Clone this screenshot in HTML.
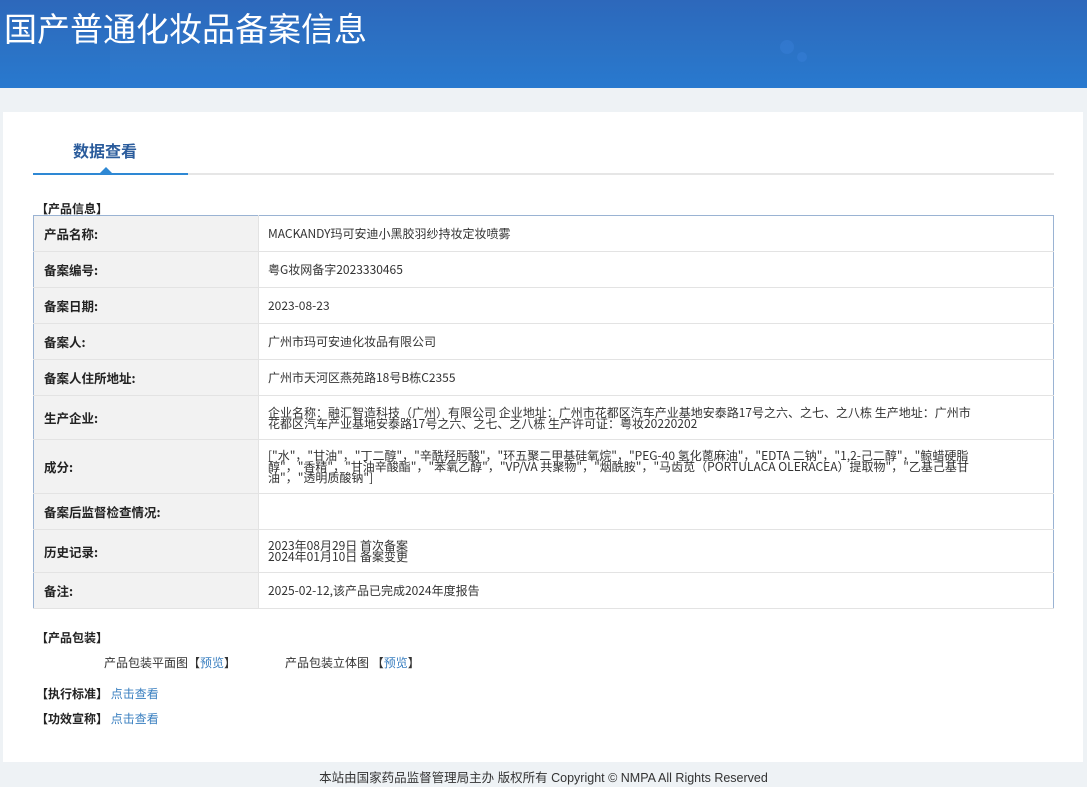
<!DOCTYPE html>
<html><head><meta charset="utf-8"><style>
*{margin:0;padding:0;box-sizing:border-box}
body{width:1087px;height:787px;background:#eef2f5;font-family:"Liberation Sans","Noto Sans CJK SC",sans-serif;color:#333;position:relative;overflow:hidden}
.hd{position:absolute;left:0;top:0;width:1087px;height:88px;background:linear-gradient(180deg,#2d68bb 0%,#2b73c6 60%,#2879cf 100%);overflow:hidden}
.hd h1{position:absolute;left:4px;top:3px;font-size:33px;font-weight:normal;color:#fff;font-family:"Noto Sans CJK SC",sans-serif}
.card{position:absolute;left:3px;top:112px;width:1080px;height:650px;background:#fff}
.tab{position:absolute;left:73px;top:138px;font-size:16px;font-weight:bold;color:#2b5c9c;font-family:"Noto Sans CJK SC",sans-serif}
.line{position:absolute;left:33px;top:173px;width:1021px;height:2px;background:#e6e6e6}
.bline{position:absolute;left:33px;top:173px;width:155px;height:2px;background:#2e88d4}
.tri{position:absolute;left:100px;top:167px;width:0;height:0;border-left:6px solid transparent;border-right:6px solid transparent;border-bottom:6px solid #2e88d4}
.sec{position:absolute;font-size:12px;font-weight:bold;color:#222;font-family:"Noto Sans CJK SC",sans-serif}
table{position:absolute;left:33px;top:215px;width:1021px;border-collapse:collapse;border:1px solid #9ab3d3}
td{border-bottom:1px solid #e3e3e3;font-size:12px;vertical-align:middle;line-height:11px;font-family:"Noto Sans CJK SC",sans-serif}
td.l{width:225px;background:#f2f2f2;font-weight:bold;font-size:12.5px;padding-left:10px;color:#222;border-right:1px solid #e3e3e3}
td.v{padding-left:9px;padding-right:75px;color:#333}
.row{position:absolute;font-size:12px;font-family:"Noto Sans CJK SC",sans-serif;color:#333}
a{color:#3a7fc0;text-decoration:none}
.ft{position:absolute;top:767px;left:0;width:1087px;text-align:center;font-size:12.5px;color:#333;font-family:"Liberation Sans","Noto Sans CJK SC",sans-serif}
</style></head><body>
<div class="hd">
<div style="position:absolute;left:110px;top:30px;width:180px;height:70px;background:rgba(80,140,220,0.1);"></div>
<div style="position:absolute;left:780px;top:40px;width:14px;height:14px;border-radius:50%;background:rgba(60,130,220,0.4)"></div>
<div style="position:absolute;left:797px;top:52px;width:10px;height:10px;border-radius:50%;background:rgba(60,130,220,0.4)"></div>
<h1>国产普通化妆品备案信息</h1></div>
<div class="card"></div>
<div class="tab">数据查看</div>
<div class="line"></div><div class="bline"></div><div class="tri"></div>
<div class="sec" style="left:36px;top:200px">【产品信息】</div>
<table>
<tr style="height:36px"><td class="l">产品名称:</td><td class="v">MACKANDY玛可安迪小黑胶羽纱持妆定妆喷雾</td></tr>
<tr style="height:36px"><td class="l">备案编号:</td><td class="v">粤G妆网备字2023330465</td></tr>
<tr style="height:36px"><td class="l">备案日期:</td><td class="v">2023-08-23</td></tr>
<tr style="height:36px"><td class="l">备案人:</td><td class="v">广州市玛可安迪化妆品有限公司</td></tr>
<tr style="height:36px"><td class="l">备案人住所地址:</td><td class="v">广州市天河区燕苑路18号B栋C2355</td></tr>
<tr style="height:44px"><td class="l">生产企业:</td><td class="v">企业名称：融汇智造科技（广州）有限公司 企业地址：广州市花都区汽车产业基地安泰路17号之六、之七、之八栋 生产地址：广州市花都区汽车产业基地安泰路17号之六、之七、之八栋 生产许可证：粤妆20220202</td></tr>
<tr style="height:54px"><td class="l">成分:</td><td class="v">["水"，"甘油"，"丁二醇"，"辛酰羟肟酸"，"环五聚二甲基硅氧烷"，"PEG-40 氢化蓖麻油"，"EDTA 二钠"，"1,2-己二醇"，"鲸蜡硬脂醇"，"香精"，"甘油辛酸酯"，"苯氧乙醇"，"VP/VA 共聚物"，"烟酰胺"，"马齿苋（PORTULACA OLERACEA）提取物"，"乙基己基甘油"，"透明质酸钠"]</td></tr>
<tr style="height:36px"><td class="l">备案后监督检查情况:</td><td class="v"></td></tr>
<tr style="height:43px"><td class="l">历史记录:</td><td class="v">2023年08月29日 首次备案<br>2024年01月10日 备案变更</td></tr>
<tr style="height:36px"><td class="l">备注:</td><td class="v">2025-02-12,该产品已完成2024年度报告</td></tr>
</table>
<div class="sec" style="left:36px;top:629px">【产品包装】</div>
<div class="row" style="left:104px;top:654px">产品包装平面图【<a>预览</a>】</div>
<div class="row" style="left:285px;top:654px">产品包装立体图 【<a>预览</a>】</div>
<div class="sec" style="left:36px;top:685px">【执行标准】 <a style="font-weight:normal">点击查看</a></div>
<div class="sec" style="left:36px;top:710px">【功效宣称】 <a style="font-weight:normal">点击查看</a></div>
<div class="ft">本站由国家药品监督管理局主办 版权所有 Copyright © NMPA All Rights Reserved</div>
</body></html>
